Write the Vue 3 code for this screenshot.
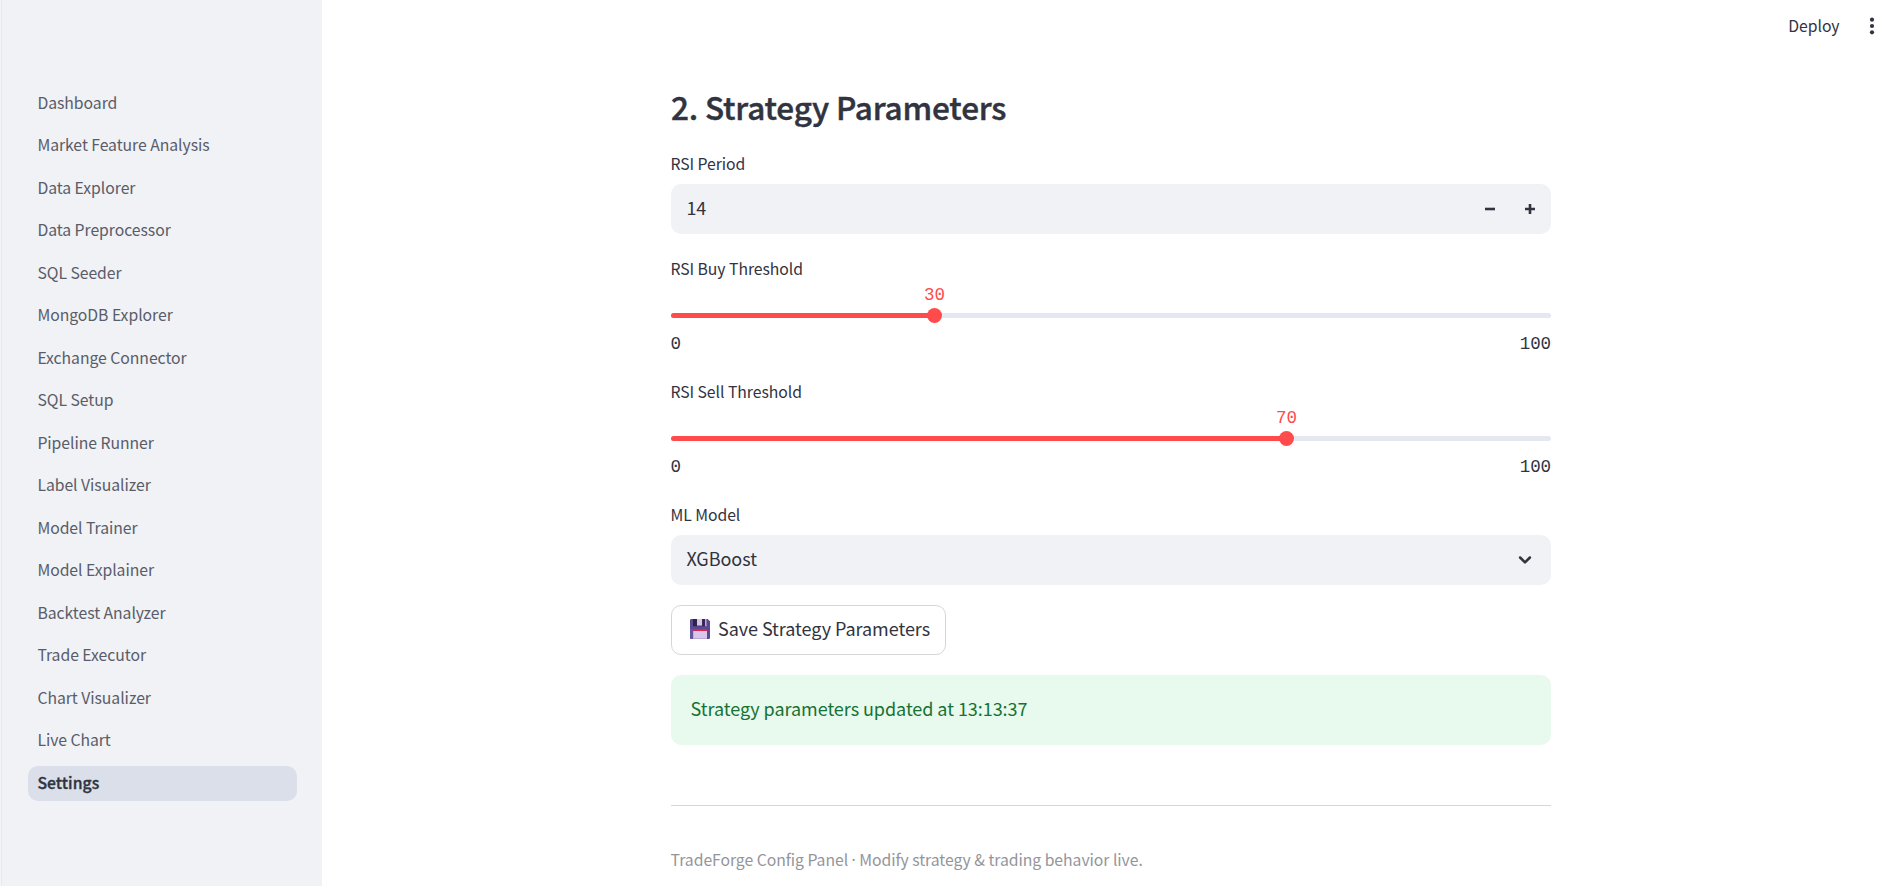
<script setup>
import { ref } from 'vue'

const pages = [
  'Dashboard', 'Market Feature Analysis', 'Data Explorer', 'Data Preprocessor', 'SQL Seeder',
  'MongoDB Explorer', 'Exchange Connector', 'SQL Setup', 'Pipeline Runner', 'Label Visualizer',
  'Model Trainer', 'Model Explainer', 'Backtest Analyzer', 'Trade Executor', 'Chart Visualizer',
  'Live Chart', 'Settings',
]
const current = ref('Settings')
const period = ref(14)
const sliders = ref([
  { label: 'RSI Buy Threshold', value: 30 },
  { label: 'RSI Sell Threshold', value: 70 },
])
</script>

<template>
  <div class="app">
    <aside class="sidebar">
      <nav class="nav">
        <a
          v-for="page in pages"
          :key="page"
          class="nav-item"
          :class="{ active: page === current }"
          @click="current = page"
        >{{ page }}</a>
      </nav>
    </aside>

    <div class="main">
      <header class="toolbar">
        <span class="deploy">Deploy</span>
        <svg class="dots" width="6" height="18" viewBox="0 0 6 18">
          <circle cx="3" cy="2.7" r="2.1" /><circle cx="3" cy="9" r="2.1" /><circle cx="3" cy="15.3" r="2.1" />
        </svg>
      </header>

      <main class="content">
        <h2 class="title">2. Strategy Parameters</h2>

        <section class="field">
          <div class="label">RSI Period</div>
          <div class="control">
            <span class="value">{{ period }}</span>
            <span class="step" @click="period--">
              <svg width="12" height="12" viewBox="0 0 12 12"><path d="M1 6H11" /></svg>
            </span>
            <span class="step" @click="period++">
              <svg width="12" height="12" viewBox="0 0 12 12"><path d="M1 6H11M6 1V11" /></svg>
            </span>
          </div>
        </section>

        <section v-for="s in sliders" :key="s.label" class="field">
          <div class="label">{{ s.label }}</div>
          <div class="slider">
            <div class="track">
              <div class="fill" :style="{ width: s.value + '%' }"></div>
              <div class="thumb" :style="{ left: s.value + '%' }">
                <span class="thumb-value">{{ s.value }}</span>
              </div>
            </div>
            <div class="ticks"><span>0</span><span>100</span></div>
          </div>
        </section>

        <section class="field">
          <div class="label">ML Model</div>
          <div class="control">
            <span class="value">XGBoost</span>
            <svg class="chevron" width="14" height="10" viewBox="0 0 14 10"><path d="M2.1 2.5L7 7.4L11.9 2.5" /></svg>
          </div>
        </section>

        <button class="save">
          <svg class="floppy" width="20" height="20" viewBox="0 0 20 20">
            <path d="M1.2 0H17.6L20 2.2V18.8Q20 20 18.8 20H1.2Q0 20 0 18.8V1.2Q0 0 1.2 0Z" fill="#594a91" />
            <path d="M0 18V19Q0 20 1.2 20H3V10H0Z" fill="#64589f" />
            <path d="M3 0H16V7.2H3Z" fill="#33204f" />
            <path d="M7 0H12.2V6.6H7Z" fill="#d5cce2" />
            <path d="M12.2 0H15V6.6H12.2Z" fill="#3b2558" />
            <path d="M15 0H16.5V7.2H15Z" fill="#b9acd0" />
            <path d="M3.2 10H17V12H3.2Z" fill="#dc2456" />
            <path d="M3.2 12H17V20H3.2Z" fill="#d8c7e8" />
            <path d="M3.2 19.2H17V20H3.2Z" fill="#b6a3cf" />
          </svg>
          <span class="save-text">Save Strategy Parameters</span>
        </button>

        <div class="alert">Strategy parameters updated at 13:13:37</div>
        <hr class="rule" />
        <footer class="caption">TradeForge Config Panel <span class="sep">·</span> Modify strategy &amp; trading behavior live.</footer>
      </main>
    </div>
  </div>
</template>

<style>
body {
  margin: 0;
  overflow: hidden;
}
</style>

<style scoped>
.app {
  display: flex;
  height: 886px;
  overflow: hidden;
  background: #fff;
  color: #31333f;
  font-family: "Noto Sans CJK SC", "Noto Sans", sans-serif;
  font-size: 18px;
  letter-spacing: -0.05px;
}
.sidebar {
  box-sizing: border-box;
  flex: 0 0 322px;
  padding: 85.9px 25px 0 26px;
  border-left: 1px solid #f4f5f7;
  background: #f0f2f6;
  box-shadow: inset 1px 0 #e6e9ea;
}
.nav {
  display: flex;
  flex-direction: column;
  gap: 7.5px;
  margin-left: 1px;
}
.nav-item {
  height: 35px;
  padding: 0 9.4px;
  border-radius: 10px;
  color: #5a5c68;
  font-size: 15.77px;
  line-height: 33px;
  cursor: pointer;
}
.nav-item.active {
  background: #dadfe9;
  color: #31333f;
  font-weight: 500;
  letter-spacing: 0.06px;
  -webkit-text-stroke: 0.35px #31333f;
}
.main {
  flex: 1;
  min-width: 0;
}
.toolbar {
  display: flex;
  align-items: center;
  justify-content: flex-end;
  box-sizing: border-box;
  height: 51px;
  padding-right: 26px;
}
.deploy {
  margin-right: 29.5px;
  font-size: 15.77px;
  line-height: 30px;
}
.dots {
  fill: #31333f;
}
.content {
  width: 880px;
  margin-left: 349px;
}
.title {
  margin: 0;
  padding: 31px 0 18px;
  font-size: 31.5px;
  font-weight: 500;
  letter-spacing: -0.17px;
  line-height: 49px;
  -webkit-text-stroke: 0.45px #31333f;
}
.field {
  margin-bottom: 20px;
}
.label {
  height: 28px;
  font-size: 15.77px;
  line-height: 30px;
  text-indent: -0.6px;
}
.control {
  display: flex;
  align-items: center;
  height: 50px;
  margin-top: 7px;
  padding-right: 1px;
  border-radius: 10px;
  background: #f0f2f6;
}
.value {
  flex: 1;
  padding: 0 0 4px 15.4px;
}
.step {
  display: flex;
  justify-content: center;
  width: 40px;
}
.step path {
  fill: none;
  stroke: #31333f;
  stroke-width: 2.6;
}
.chevron {
  margin-right: 18px;
}
.chevron path {
  fill: none;
  stroke: #31333f;
  stroke-width: 2.5;
  stroke-linecap: round;
  stroke-linejoin: round;
}
.slider {
  padding: 31px 0 2px;
  font-family: "Liberation Mono", monospace;
  font-size: 17.5px;
  letter-spacing: -0.1px;
  line-height: 20px;
}
.track {
  position: relative;
  height: 5px;
  border-radius: 3px;
  background: #e5e8f0;
}
.fill {
  height: 5px;
  border-radius: 3px 0 0 3px;
  background: #ff4b4b;
}
.thumb {
  position: absolute;
  top: -5px;
  width: 15px;
  height: 15px;
  margin-left: -8px;
  border-radius: 50%;
  background: #ff4b4b;
}
.thumb-value {
  position: absolute;
  top: -23px;
  left: 50%;
  color: #ff4b4b;
  transform: translateX(-50%);
}
.ticks {
  display: flex;
  justify-content: space-between;
  height: 20px;
  margin: 16px 0 1px -0.5px;
}
.save {
  display: flex;
  align-items: center;
  box-sizing: border-box;
  width: 275px;
  height: 50px;
  padding: 0 0 0 18px;
  border: 1px solid #d6d6d9;
  border-radius: 10px;
  background: #fff;
  color: inherit;
  font: inherit;
  letter-spacing: inherit;
  white-space: nowrap;
}
.floppy {
  flex: none;
  margin: 0 8px 2px 0;
}
.save-text {
  padding-bottom: 4px;
}
.alert {
  height: 70px;
  margin-top: 20px;
  padding-left: 19.5px;
  border-radius: 10px;
  background: #e8f9ee;
  color: #177233;
  line-height: 66px;
}
.rule {
  height: 1px;
  margin: 60px 0 0;
  border: 0;
  background: #d6d6d9;
}
.caption {
  margin-top: 39px;
  color: #94959b;
  font-size: 15.77px;
  line-height: 30px;
  text-indent: -0.4px;
}
.sep {
  font-family: "Noto Sans", sans-serif;
  line-height: 1;
}
</style>
